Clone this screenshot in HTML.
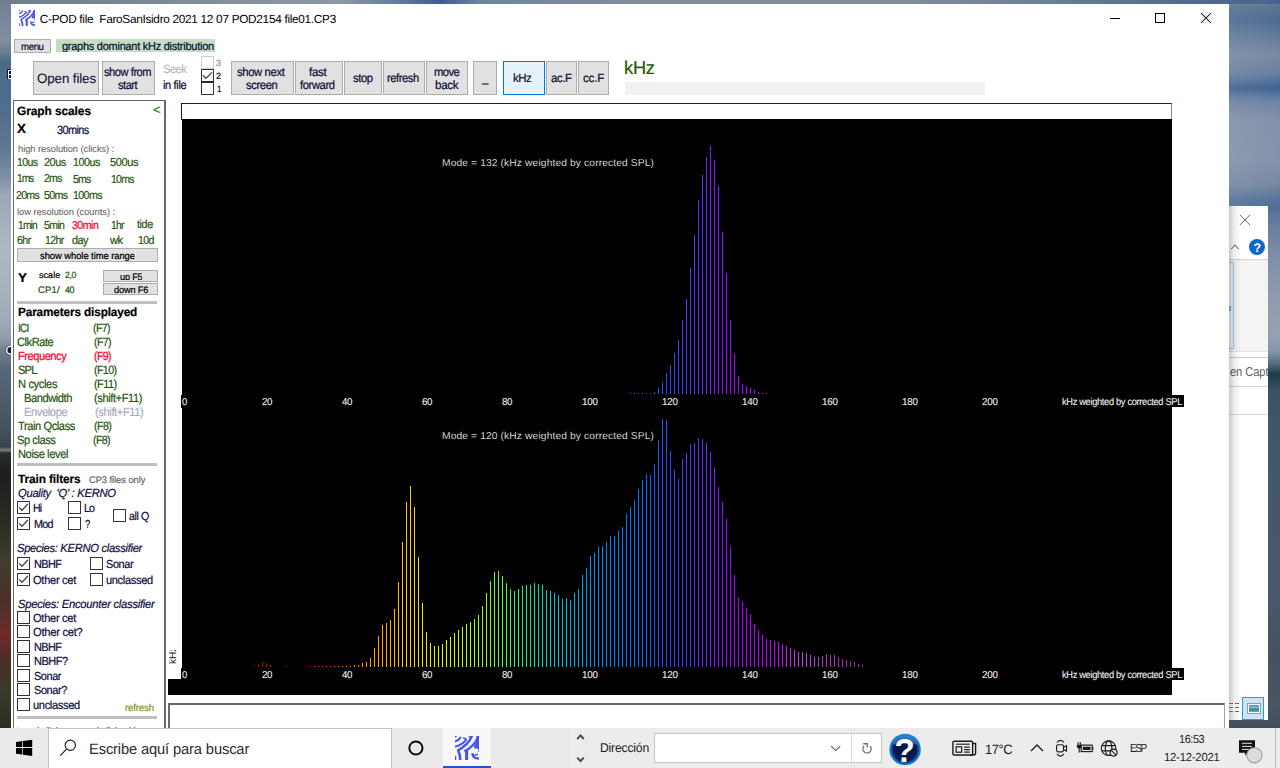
<!DOCTYPE html>
<html lang="es"><head><meta charset="utf-8"><title>C-POD file</title>
<style>
html,body{margin:0;padding:0;}
body{width:1280px;height:768px;overflow:hidden;position:relative;background:#5c6f82;font-family:"Liberation Sans",sans-serif;}
div,span,svg{position:absolute;box-sizing:border-box;}
.t{white-space:pre;text-rendering:geometricPrecision;transform-origin:0 50%;}
.btn{background:#e1e1e1;border:1px solid #adadad;}
.bt{white-space:nowrap;text-align:center;color:#15153a;}
.cb{background:#fff;border:1px solid #333;}
.sep{background:#c0c0c0;}

</style></head>
<body>
<div style="left:0px;top:0px;width:20px;height:768px;background:linear-gradient(180deg,#6e7f90 0px,#77869a 15px,#808d9b 40px,#6a7f94 52px,#4b6a8a 62px,#4f6d8c 110px,#5e7892 150px,#7a8ea4 175px,#9ca8b6 195px,#b0b8c2 250px,#a0abb7 320px,#8d9aa8 340px,#6f8090 350px,#556878 370px,#42525f 430px,#39444c 447px,#80807a 450px,#2a2e30 453px,#1c1e20 470px,#2a2a22 520px,#3f3d2c 560px,#4a3028 600px,#6e2a2a 635px,#4a2c26 660px,#3a3a2a 690px,#2e2c24 728px);"></div>
<div style="left:7px;top:69px;width:4px;height:10px;background:#141a3c;"></div>
<div style="left:8px;top:70px;width:1.4px;height:9px;background:#f4fbff;"></div>
<div style="left:8px;top:70px;width:3px;height:1.2px;background:#f4fbff;"></div>
<div style="left:8px;top:74.2px;width:3px;height:1.2px;background:#f4fbff;"></div>
<div style="left:8px;top:77.8px;width:3px;height:1.2px;background:#f4fbff;"></div>
<svg style="left:3px;top:343px" width="8" height="14" viewBox="3 343 8 14"><circle cx="10.6" cy="350.2" r="5.6" fill="#3a4250" opacity="0.55"/><circle cx="10.6" cy="350.2" r="3.9" fill="#1c2030" stroke="#f2f6fa" stroke-width="1.5"/></svg>
<div style="left:1229px;top:0px;width:51px;height:768px;background:linear-gradient(180deg,#70839b 0px,#5d7797 8px,#4e6d96 20px,#64809f 35px,#8292ab 55px,#6a85a8 75px,#3f6394 88px,#6f88aa 100px,#8c9bb3 120px,#8e9cb3 160px,#7d8fab 185px,#5877a0 200px,#50709a 208px,#6a809e 228px,#8090a8 260px,#909cae 300px,#95a1b2 335px,#8494a6 352px,#566a7c 364px,#1f3c4a 374px,#3a5463 392px,#425868 450px,#45586a 520px,#48586a 600px,#455260 660px,#4a5564 705px,#424e5e 728px);"></div>
<div style="left:1229px;top:0px;width:51px;height:210px;background:linear-gradient(90deg,rgba(140,150,165,0.22),rgba(60,80,110,0.12));"></div>
<div style="left:0px;top:0px;width:1280px;height:4px;background:linear-gradient(90deg,#6e7f90 0px,#7d8b9a 180px,#8a98a6 340px,#5f7aa0 400px,#3d5e94 440px,#6e85a2 480px,#7f8d9c 640px,#808e9d 900px,#6a7f98 1050px,#55708f 1150px,#46658e 1280px);"></div>
<div style="left:1229px;top:206px;width:39px;height:514px;background:#fff;"></div>
<div style="left:1229px;top:260px;width:39px;height:91px;background:#f4f4f4;"></div>
<div style="left:1229px;top:259px;width:39px;height:1px;background:#d4d4d4;"></div>
<div style="left:1229px;top:262px;width:5px;height:87px;background:#eef5fc;border:1px solid #a9c8ea;border-left:none;"></div>
<div style="left:1229px;top:351px;width:39px;height:1px;background:#e2e2e2;"></div>
<div style="left:1229px;top:357px;width:39px;height:1px;background:#cfcfcf;"></div>
<div style="left:1229px;top:386px;width:39px;height:1px;background:#d4d4d4;"></div>
<div style="left:1229px;top:414px;width:39px;height:1px;background:#d8d8d8;"></div>
<div style="left:1229px;top:306px;width:1.5px;height:5px;background:#7ab0e8;"></div>
<svg style="left:1239px;top:214px" width="12" height="12" viewBox="0 0 12 12"><path d="M0.8 0.8L11 11M11 0.8L0.8 11" stroke="#6a6a6a" stroke-width="1" fill="none"/></svg>
<svg style="left:1230px;top:242px" width="10" height="9" viewBox="0 0 10 9"><path d="M1.2 7.2L5 3.0L8.8 7.2" stroke="#8a8a8a" stroke-width="1.2" fill="none"/></svg>
<div style="left:1249px;top:239px;width:16px;height:16px;background:#1268c8;border-radius:8px;"></div>
<span class="t " style="left:1253.60px;top:242px;font-size:12.5px;line-height:12.5px;color:#fff;font-weight:bold;">?</span>
<div style="left:1229px;top:360px;width:39px;height:24px;overflow:hidden;"><span class="t" style="left:1.2px;top:6px;font-size:12.8px;line-height:12.8px;color:#5c5c5c;transform:scaleX(0.87);letter-spacing:-0.1px;">en Capt</span></div>
<div style="left:1229px;top:206px;width:12px;height:514px;background:linear-gradient(90deg,rgba(0,0,0,0.22),rgba(0,0,0,0.08) 40%,rgba(0,0,0,0));"></div>
<div style="left:1242px;top:697px;width:22px;height:23px;background:#cce4f7;border:1px solid #2a9be0;"></div>
<div style="left:1247px;top:703px;width:14px;height:11px;background:#fff;border:1px solid #9a9a9a;"></div>
<div style="left:1249px;top:705px;width:10px;height:7px;background:linear-gradient(180deg,#4a90e0 0%,#7ab8ee 40%,#3f7f6a 60%,#7aa6c8 100%);"></div>
<div style="left:1229.3px;top:703px;width:3.6px;height:1px;background:#666;"></div>
<div style="left:1235px;top:703px;width:4px;height:1px;background:#666;"></div>
<div style="left:1229.3px;top:707px;width:3.6px;height:1px;background:#666;"></div>
<div style="left:1235px;top:707px;width:4px;height:1px;background:#666;"></div>
<div style="left:1229.3px;top:711px;width:3.6px;height:1px;background:#666;"></div>
<div style="left:1235px;top:711px;width:4px;height:1px;background:#666;"></div>
<div style="left:11px;top:4px;width:1218px;height:724px;background:#fff;"></div>
<svg style="left:19px;top:10px" width="16" height="16" viewBox="0 0 24 24"><g stroke="#4854ee" fill="none"><path d="M0 5.4C2.5 4.8 4.6 3.2 6 1" stroke-width="2.15"/><path d="M0 10.8C4.5 9.4 9 6.6 11.4 3.6" stroke-width="2.15"/><path d="M8.2 1.9L11.9 3.5" stroke-width="1.7"/><path d="M2.2 14.8C8 11.6 14.3 6.7 16.4 1" stroke-width="2.35"/><path d="M3.3 14.8C4.7 17.7 5.3 20.6 5.3 24" stroke-width="2.6"/><path d="M9.4 15.4C14.5 12.6 19.3 8.7 21.6 4L22.8 0.8" stroke-width="2.35"/><path d="M11.6 14.4V24" stroke-width="3.1"/><path d="M17.6 17.2C17.2 20.4 19.6 22.6 24 22.6" stroke-width="2.5"/><path d="M19.4 19.2L23 18.2" stroke-width="1.6"/></g><g fill="#4854ee"><path d="M13.6 0H18.2L17 2.6L14.8 2Z"/><path d="M21.6 0H24V15.6L23 16.2L20.4 12.8L18.6 10.8L21 7.2Z"/><rect x="0" y="19.8" width="1.2" height="4.2"/><rect x="0" y="0" width="1.6" height="1.4"/></g><circle cx="21.7" cy="14.3" r="1.8" fill="#fff"/></svg>
<span class="t " style="left:39.80px;top:14px;font-size:11.8px;line-height:11.8px;color:#000;letter-spacing:-0.291px;">C-POD file  FaroSanIsidro 2021 12 07 POD2154 file01.CP3</span>
<div style="left:1110px;top:18px;width:10px;height:1px;background:#000;"></div>
<div style="left:1155px;top:13px;width:10px;height:10px;border:1px solid #000;"></div>
<svg style="left:1200px;top:12px" width="12" height="12" viewBox="0 0 12 12"><path d="M1 1L11 11M11 1L1 11" stroke="#000" stroke-width="1.05" fill="none"/></svg>
<div class="btn" style="left:14px;top:39px;width:37px;height:14px;"></div>
<span class="t " style="left:21.00px;top:43px;font-size:10.2px;line-height:10.2px;color:#0c0c34;-webkit-text-stroke:0.22px currentColor;letter-spacing:-0.414px;transform:scaleX(0.9488);">menu</span>
<div style="left:56px;top:39px;width:159px;height:13px;background:#c3dfc3;"></div>
<span class="t " style="left:61.90px;top:42px;font-size:11.5px;line-height:11.5px;color:#0c0c34;-webkit-text-stroke:0.22px currentColor;letter-spacing:-0.248px;transform:scaleX(0.9519);height:10px;overflow:hidden;">graphs dominant kHz distribution</span>
<div class="btn" style="left:33px;top:61px;width:66px;height:34px;"></div>
<span class="t " style="left:36.50px;top:72px;font-size:13.6px;line-height:13.6px;color:#0c0c34;-webkit-text-stroke:0.05px currentColor;letter-spacing:-0.118px;transform:scaleX(0.9824);">Open files</span>
<div class="btn" style="left:102px;top:61px;width:53px;height:34px;"></div>
<span class="t " style="left:103.70px;top:66px;font-size:12px;line-height:12px;color:#0c0c34;-webkit-text-stroke:0.22px currentColor;letter-spacing:-0.485px;transform:scaleX(0.9246);">show from</span>
<span class="t " style="left:117.70px;top:79px;font-size:12px;line-height:12px;color:#0c0c34;-webkit-text-stroke:0.22px currentColor;letter-spacing:-0.468px;transform:scaleX(0.9128);">start</span>
<span class="t " style="left:163.00px;top:63px;font-size:12px;line-height:12px;color:#b4b4c4;-webkit-text-stroke:0.1px currentColor;letter-spacing:-0.577px;transform:scaleX(0.9325);">Seek</span>
<span class="t " style="left:162.80px;top:79px;font-size:12px;line-height:12px;color:#0c0c34;-webkit-text-stroke:0.22px currentColor;letter-spacing:-0.368px;transform:scaleX(0.9145);">in file</span>
<div style="left:201px;top:56px;width:13px;height:13px;background:#fff;border:1px solid #cfcfcf;"></div>
<div class="cb" style="left:201px;top:69px;width:13px;height:13px;"></div>
<div class="cb" style="left:201px;top:82px;width:13px;height:13px;"></div>
<div style="left:201px;top:81px;width:13px;height:2px;background:#2a2a2a;"></div>
<svg style="left:201px;top:69px" width="13" height="13" viewBox="0 0 13 13"><path d="M1.9 6.1L4.8 9.4L11 3.4" stroke="#333" stroke-width="1.15" fill="none"/></svg>
<span class="t " style="left:216.00px;top:59px;font-size:9px;line-height:9px;color:#9090a8;-webkit-text-stroke:0.22px currentColor;letter-spacing:-0.008px;transform:scaleX(0.9984);">3</span>
<span class="t " style="left:216.00px;top:72px;font-size:9px;line-height:9px;color:#0c0c34;-webkit-text-stroke:0.22px currentColor;letter-spacing:-0.008px;transform:scaleX(0.9984);">2</span>
<span class="t " style="left:216.50px;top:85px;font-size:9px;line-height:9px;color:#0c0c34;-webkit-text-stroke:0.22px currentColor;letter-spacing:-0.508px;transform:scaleX(0.8873);">1</span>
<div class="btn" style="left:231px;top:61px;width:63px;height:34px;"></div>
<span class="t " style="left:237.40px;top:66px;font-size:12px;line-height:12px;color:#0c0c34;-webkit-text-stroke:0.22px currentColor;letter-spacing:-0.389px;transform:scaleX(0.9388);">show next</span>
<span class="t " style="left:245.60px;top:79px;font-size:12px;line-height:12px;color:#0c0c34;-webkit-text-stroke:0.22px currentColor;letter-spacing:-0.423px;transform:scaleX(0.9376);">screen</span>
<div class="btn" style="left:295px;top:61px;width:48px;height:34px;"></div>
<span class="t " style="left:308.70px;top:66px;font-size:12px;line-height:12px;color:#0c0c34;-webkit-text-stroke:0.22px currentColor;letter-spacing:-0.274px;transform:scaleX(0.9556);">fast</span>
<span class="t " style="left:300.30px;top:79px;font-size:12px;line-height:12px;color:#0c0c34;-webkit-text-stroke:0.22px currentColor;letter-spacing:-0.418px;transform:scaleX(0.9331);">forward</span>
<div class="btn" style="left:344px;top:61px;width:38px;height:34px;"></div>
<span class="t " style="left:352.50px;top:72px;font-size:12px;line-height:12px;color:#0c0c34;-webkit-text-stroke:0.22px currentColor;letter-spacing:-0.448px;transform:scaleX(0.9370);">stop</span>
<div class="btn" style="left:383px;top:61px;width:42px;height:34px;"></div>
<span class="t " style="left:387.40px;top:72px;font-size:12px;line-height:12px;color:#0c0c34;-webkit-text-stroke:0.22px currentColor;letter-spacing:-0.430px;transform:scaleX(0.9258);">refresh</span>
<div class="btn" style="left:426px;top:61px;width:42px;height:34px;"></div>
<span class="t " style="left:433.80px;top:66px;font-size:12px;line-height:12px;color:#0c0c34;-webkit-text-stroke:0.22px currentColor;letter-spacing:-0.591px;transform:scaleX(0.9357);">move</span>
<span class="t " style="left:434.60px;top:79px;font-size:12px;line-height:12px;color:#0c0c34;-webkit-text-stroke:0.22px currentColor;letter-spacing:-0.293px;transform:scaleX(0.9641);">back</span>
<div class="btn" style="left:473px;top:61px;width:24px;height:34px;"></div>
<span class="t " style="left:482.00px;top:72px;font-size:12px;line-height:12px;color:#0c0c34;-webkit-text-stroke:0.22px currentColor;letter-spacing:-0.344px;transform:scaleX(0.9458);">_</span>
<div style="left:503px;top:61px;width:42px;height:34px;background:#e5f1fb;border:1px solid #0078d7;"></div>
<span class="t " style="left:513.40px;top:72px;font-size:12px;line-height:12px;color:#0c0c34;-webkit-text-stroke:0.22px currentColor;letter-spacing:-0.493px;transform:scaleX(0.9499);">kHz</span>
<div class="btn" style="left:546px;top:61px;width:31px;height:34px;"></div>
<span class="t " style="left:551.00px;top:72px;font-size:12px;line-height:12px;color:#0c0c34;-webkit-text-stroke:0.22px currentColor;letter-spacing:-0.391px;transform:scaleX(0.9471);">ac.F</span>
<div class="btn" style="left:578px;top:61px;width:31px;height:34px;"></div>
<span class="t " style="left:582.50px;top:72px;font-size:12px;line-height:12px;color:#0c0c34;-webkit-text-stroke:0.22px currentColor;letter-spacing:-0.229px;transform:scaleX(0.9688);">cc.F</span>
<span class="t " style="left:624.00px;top:59px;font-size:18.5px;line-height:18.5px;color:#1f5a00;-webkit-text-stroke:0.22px currentColor;letter-spacing:-0.219px;transform:scaleX(0.9861);">kHz</span>
<div style="left:625px;top:82px;width:360px;height:13px;background:#f0f0f0;"></div>
<div style="left:13px;top:100px;width:153px;height:628px;background:#fff;border:1px solid #6a6a6a;border-right:2px solid #6a6a6a;border-bottom:none;"></div>
<span class="t " style="left:17.00px;top:105px;font-size:12px;line-height:12px;color:#000;font-weight:bold;-webkit-text-stroke:0.22px currentColor;letter-spacing:-0.062px;transform:scaleX(0.9908);">Graph scales</span>
<span class="t " style="left:152.50px;top:103px;font-size:13px;line-height:13px;color:#2a8a14;-webkit-text-stroke:0.22px currentColor;letter-spacing:-0.047px;transform:scaleX(0.9938);">&lt;</span>
<span class="t " style="left:17.00px;top:122px;font-size:13.2px;line-height:13.2px;color:#000;font-weight:bold;-webkit-text-stroke:0.22px currentColor;letter-spacing:0.102px;transform:scaleX(1.0114);">X</span>
<span class="t " style="left:57.00px;top:124px;font-size:12px;line-height:12px;color:#0e0e40;-webkit-text-stroke:0.22px currentColor;letter-spacing:-0.639px;transform:scaleX(0.9100);">30mins</span>
<span class="t " style="left:17.70px;top:145px;font-size:9.3px;line-height:9.3px;color:#686868;-webkit-text-stroke:0.1px currentColor;letter-spacing:-0.017px;transform:scaleX(0.9957);">high resolution (clicks) :</span>
<span class="t " style="left:17.20px;top:157px;font-size:11.6px;line-height:11.6px;color:#27560f;-webkit-text-stroke:0.22px currentColor;letter-spacing:-0.707px;transform:scaleX(0.9079);">10us</span>
<span class="t " style="left:44.00px;top:157px;font-size:11.6px;line-height:11.6px;color:#27560f;-webkit-text-stroke:0.22px currentColor;letter-spacing:-0.490px;transform:scaleX(0.9379);">20us</span>
<span class="t " style="left:73.00px;top:157px;font-size:11.6px;line-height:11.6px;color:#27560f;-webkit-text-stroke:0.22px currentColor;letter-spacing:-0.537px;transform:scaleX(0.9271);">100us</span>
<span class="t " style="left:110.00px;top:157px;font-size:11.6px;line-height:11.6px;color:#27560f;-webkit-text-stroke:0.22px currentColor;letter-spacing:-0.387px;transform:scaleX(0.9485);">500us</span>
<span class="t " style="left:17.20px;top:173px;font-size:11.6px;line-height:11.6px;color:#27560f;-webkit-text-stroke:0.22px currentColor;letter-spacing:-1.177px;transform:scaleX(0.8797);">1ms</span>
<span class="t " style="left:44.00px;top:173px;font-size:11.6px;line-height:11.6px;color:#27560f;-webkit-text-stroke:0.22px currentColor;letter-spacing:-0.927px;transform:scaleX(0.9076);">2ms</span>
<span class="t " style="left:73.00px;top:174px;font-size:11.6px;line-height:11.6px;color:#27560f;-webkit-text-stroke:0.22px currentColor;letter-spacing:-0.927px;transform:scaleX(0.9076);">5ms</span>
<span class="t " style="left:111.00px;top:174px;font-size:11.6px;line-height:11.6px;color:#27560f;-webkit-text-stroke:0.22px currentColor;letter-spacing:-0.827px;transform:scaleX(0.9042);">10ms</span>
<span class="t " style="left:16.30px;top:190px;font-size:11.6px;line-height:11.6px;color:#27560f;-webkit-text-stroke:0.22px currentColor;letter-spacing:-0.777px;transform:scaleX(0.9105);">20ms</span>
<span class="t " style="left:44.00px;top:190px;font-size:11.6px;line-height:11.6px;color:#27560f;-webkit-text-stroke:0.22px currentColor;letter-spacing:-0.710px;transform:scaleX(0.9188);">50ms</span>
<span class="t " style="left:73.00px;top:190px;font-size:11.6px;line-height:11.6px;color:#27560f;-webkit-text-stroke:0.22px currentColor;letter-spacing:-0.664px;transform:scaleX(0.9174);">100ms</span>
<span class="t " style="left:17.00px;top:208px;font-size:9.3px;line-height:9.3px;color:#686868;-webkit-text-stroke:0.1px currentColor;letter-spacing:0.000px;transform:scaleX(1.0001);">low resolution (counts) :</span>
<span class="t " style="left:18.00px;top:220px;font-size:11.6px;line-height:11.6px;color:#27560f;-webkit-text-stroke:0.22px currentColor;letter-spacing:-0.890px;transform:scaleX(0.8812);">1min</span>
<span class="t " style="left:44.00px;top:220px;font-size:11.6px;line-height:11.6px;color:#27560f;-webkit-text-stroke:0.22px currentColor;letter-spacing:-0.690px;transform:scaleX(0.9103);">5min</span>
<span class="t " style="left:72.20px;top:220px;font-size:11.6px;line-height:11.6px;color:#f8002a;-webkit-text-stroke:0.22px currentColor;letter-spacing:-0.597px;transform:scaleX(0.9182);">30min</span>
<span class="t " style="left:111.00px;top:220px;font-size:11.6px;line-height:11.6px;color:#27560f;-webkit-text-stroke:0.22px currentColor;letter-spacing:-0.841px;transform:scaleX(0.8884);">1hr</span>
<span class="t " style="left:136.90px;top:219px;font-size:11.6px;line-height:11.6px;color:#27560f;-webkit-text-stroke:0.22px currentColor;letter-spacing:-0.417px;transform:scaleX(0.9283);">tide</span>
<span class="t " style="left:17.20px;top:235px;font-size:11.6px;line-height:11.6px;color:#27560f;-webkit-text-stroke:0.22px currentColor;letter-spacing:-0.616px;transform:scaleX(0.9206);">6hr</span>
<span class="t " style="left:45.20px;top:235px;font-size:11.6px;line-height:11.6px;color:#27560f;-webkit-text-stroke:0.22px currentColor;letter-spacing:-0.670px;transform:scaleX(0.9053);">12hr</span>
<span class="t " style="left:72.00px;top:235px;font-size:11.6px;line-height:11.6px;color:#27560f;-webkit-text-stroke:0.22px currentColor;letter-spacing:-0.551px;transform:scaleX(0.9374);">day</span>
<span class="t " style="left:110.00px;top:235px;font-size:11.6px;line-height:11.6px;color:#27560f;-webkit-text-stroke:0.22px currentColor;letter-spacing:-0.536px;transform:scaleX(0.9607);">wk</span>
<span class="t " style="left:137.70px;top:235px;font-size:11.6px;line-height:11.6px;color:#27560f;-webkit-text-stroke:0.22px currentColor;letter-spacing:-0.761px;transform:scaleX(0.9146);">10d</span>
<div class="btn" style="left:17px;top:248px;width:141px;height:14px;"></div>
<span class="t " style="left:40.00px;top:252px;font-size:9.6px;line-height:9.6px;color:#000;-webkit-text-stroke:0.22px currentColor;letter-spacing:-0.078px;transform:scaleX(0.9838);height:8.6px;overflow:hidden;">show whole time range</span>
<span class="t " style="left:17.70px;top:272px;font-size:12.8px;line-height:12.8px;color:#000;font-weight:bold;-webkit-text-stroke:0.22px currentColor;letter-spacing:0.377px;transform:scaleX(1.0422);">Y</span>
<span class="t " style="left:38.80px;top:271px;font-size:9px;line-height:9px;color:#000;-webkit-text-stroke:0.22px currentColor;letter-spacing:0.023px;transform:scaleX(1.0044);">scale</span>
<span class="t " style="left:64.80px;top:271px;font-size:9px;line-height:9px;color:#27560f;-webkit-text-stroke:0.22px currentColor;letter-spacing:-0.279px;transform:scaleX(0.9534);">2,0</span>
<span class="t " style="left:37.80px;top:286px;font-size:9.5px;line-height:9.5px;color:#27560f;-webkit-text-stroke:0.22px currentColor;letter-spacing:0.079px;transform:scaleX(1.0111);">CP1/</span>
<span class="t " style="left:65.00px;top:286px;font-size:9.5px;line-height:9.5px;color:#27560f;-webkit-text-stroke:0.22px currentColor;letter-spacing:-0.589px;transform:scaleX(0.9410);">40</span>
<div class="btn" style="left:103px;top:270px;width:55px;height:12px;"></div>
<span class="t " style="left:119.70px;top:272px;font-size:9.4px;line-height:9.4px;color:#000;-webkit-text-stroke:0.22px currentColor;letter-spacing:-0.173px;transform:scaleX(0.9703);height:8.4px;overflow:hidden;">up F5</span>
<div class="btn" style="left:103px;top:283px;width:55px;height:12px;"></div>
<span class="t " style="left:113.70px;top:285px;font-size:9.4px;line-height:9.4px;color:#000;-webkit-text-stroke:0.22px currentColor;letter-spacing:-0.131px;transform:scaleX(0.9777);">down F6</span>
<div class="sep" style="left:17px;top:301px;width:140px;height:3px;"></div>
<span class="t " style="left:17.70px;top:306px;font-size:12px;line-height:12px;color:#000;font-weight:bold;-webkit-text-stroke:0.22px currentColor;letter-spacing:-0.126px;transform:scaleX(0.9804);">Parameters displayed</span>
<span class="t " style="left:17.70px;top:322px;font-size:12px;line-height:12px;color:#27560f;-webkit-text-stroke:0.22px currentColor;letter-spacing:-1.011px;transform:scaleX(0.8482);">ICI</span>
<span class="t " style="left:93.10px;top:322px;font-size:12px;line-height:12px;color:#27560f;-webkit-text-stroke:0.22px currentColor;letter-spacing:-0.750px;transform:scaleX(0.8861);">(F7)</span>
<span class="t " style="left:17.30px;top:336px;font-size:12px;line-height:12px;color:#27560f;-webkit-text-stroke:0.22px currentColor;letter-spacing:-0.499px;transform:scaleX(0.9246);">ClkRate</span>
<span class="t " style="left:94.40px;top:336px;font-size:12px;line-height:12px;color:#27560f;-webkit-text-stroke:0.22px currentColor;letter-spacing:-0.750px;transform:scaleX(0.8861);">(F7)</span>
<span class="t " style="left:17.50px;top:350px;font-size:12px;line-height:12px;color:#f8002a;-webkit-text-stroke:0.22px currentColor;letter-spacing:-0.500px;transform:scaleX(0.9241);">Frequency</span>
<span class="t " style="left:94.40px;top:350px;font-size:12px;line-height:12px;color:#f8002a;-webkit-text-stroke:0.22px currentColor;letter-spacing:-0.750px;transform:scaleX(0.8861);">(F9)</span>
<span class="t " style="left:17.50px;top:364px;font-size:12px;line-height:12px;color:#27560f;-webkit-text-stroke:0.22px currentColor;letter-spacing:-0.822px;transform:scaleX(0.9219);">SPL</span>
<span class="t " style="left:94.40px;top:364px;font-size:12px;line-height:12px;color:#27560f;-webkit-text-stroke:0.22px currentColor;letter-spacing:-0.696px;transform:scaleX(0.8924);">(F10)</span>
<span class="t " style="left:17.70px;top:378px;font-size:12px;line-height:12px;color:#27560f;-webkit-text-stroke:0.22px currentColor;letter-spacing:-0.417px;transform:scaleX(0.9311);">N cycles</span>
<span class="t " style="left:94.40px;top:378px;font-size:12px;line-height:12px;color:#27560f;-webkit-text-stroke:0.22px currentColor;letter-spacing:-0.585px;transform:scaleX(0.9080);">(F11)</span>
<span class="t " style="left:23.50px;top:392px;font-size:12px;line-height:12px;color:#27560f;-webkit-text-stroke:0.22px currentColor;letter-spacing:-0.478px;transform:scaleX(0.9268);">Bandwidth</span>
<span class="t " style="left:94.40px;top:392px;font-size:12px;line-height:12px;color:#27560f;-webkit-text-stroke:0.22px currentColor;letter-spacing:-0.420px;transform:scaleX(0.9202);">(shift+F11)</span>
<span class="t " style="left:23.50px;top:406px;font-size:12px;line-height:12px;color:#adadbd;-webkit-text-stroke:0.22px currentColor;letter-spacing:-0.453px;transform:scaleX(0.9323);">Envelope</span>
<span class="t " style="left:95.00px;top:406px;font-size:12px;line-height:12px;color:#adadbd;-webkit-text-stroke:0.22px currentColor;letter-spacing:-0.400px;transform:scaleX(0.9243);">(shift+F11)</span>
<span class="t " style="left:17.70px;top:420px;font-size:12px;line-height:12px;color:#27560f;-webkit-text-stroke:0.22px currentColor;letter-spacing:-0.437px;transform:scaleX(0.9227);">Train Qclass</span>
<span class="t " style="left:94.00px;top:420px;font-size:12px;line-height:12px;color:#27560f;-webkit-text-stroke:0.22px currentColor;letter-spacing:-0.683px;transform:scaleX(0.8972);">(F8)</span>
<span class="t " style="left:17.30px;top:434px;font-size:12px;line-height:12px;color:#27560f;-webkit-text-stroke:0.22px currentColor;letter-spacing:-0.461px;transform:scaleX(0.9233);">Sp class</span>
<span class="t " style="left:93.10px;top:434px;font-size:12px;line-height:12px;color:#27560f;-webkit-text-stroke:0.22px currentColor;letter-spacing:-0.750px;transform:scaleX(0.8861);">(F8)</span>
<span class="t " style="left:17.70px;top:448px;font-size:12px;line-height:12px;color:#27560f;-webkit-text-stroke:0.22px currentColor;letter-spacing:-0.415px;transform:scaleX(0.9239);">Noise level</span>
<div class="sep" style="left:17px;top:463px;width:140px;height:3px;"></div>
<span class="t " style="left:18.00px;top:473px;font-size:12px;line-height:12px;color:#000;font-weight:bold;-webkit-text-stroke:0.22px currentColor;letter-spacing:-0.087px;transform:scaleX(0.9836);">Train filters</span>
<span class="t " style="left:88.80px;top:476px;font-size:9.5px;line-height:9.5px;color:#686868;-webkit-text-stroke:0.22px currentColor;letter-spacing:-0.065px;transform:scaleX(0.9852);">CP3 files only</span>
<span class="t " style="left:18.00px;top:488px;font-size:11.8px;line-height:11.8px;color:#0e0e40;font-style:italic;-webkit-text-stroke:0.22px currentColor;letter-spacing:-0.283px;transform:scaleX(0.9480);">Quality  &#x27;Q&#x27; : KERNO</span>
<div class="cb" style="left:17px;top:501px;width:13px;height:13px;"></div>
<svg style="left:17px;top:501px" width="13" height="13" viewBox="0 0 13 13"><path d="M2.2 6.4L5 9.3L10.8 3" stroke="#333" stroke-width="1.15" fill="none"/></svg>
<span class="t " style="left:33.40px;top:503px;font-size:11.7px;line-height:11.7px;color:#0e0e40;-webkit-text-stroke:0.22px currentColor;letter-spacing:-0.973px;transform:scaleX(0.9034);">Hi</span>
<div class="cb" style="left:17px;top:517px;width:13px;height:13px;"></div>
<svg style="left:17px;top:517px" width="13" height="13" viewBox="0 0 13 13"><path d="M2.2 6.4L5 9.3L10.8 3" stroke="#333" stroke-width="1.15" fill="none"/></svg>
<span class="t " style="left:33.50px;top:519px;font-size:11.7px;line-height:11.7px;color:#0e0e40;-webkit-text-stroke:0.22px currentColor;letter-spacing:-0.787px;transform:scaleX(0.9256);">Mod</span>
<div class="cb" style="left:68px;top:501px;width:13px;height:13px;"></div>
<span class="t " style="left:84.20px;top:503px;font-size:11.7px;line-height:11.7px;color:#0e0e40;-webkit-text-stroke:0.22px currentColor;letter-spacing:-1.108px;transform:scaleX(0.9070);">Lo</span>
<div class="cb" style="left:68px;top:517px;width:13px;height:13px;"></div>
<span class="t " style="left:85.00px;top:519px;font-size:11.7px;line-height:11.7px;color:#0e0e40;-webkit-text-stroke:0.22px currentColor;letter-spacing:-1.058px;transform:scaleX(0.8062);">?</span>
<div class="cb" style="left:113px;top:509px;width:13px;height:13px;"></div>
<span class="t " style="left:128.70px;top:511px;font-size:11.7px;line-height:11.7px;color:#0e0e40;-webkit-text-stroke:0.22px currentColor;letter-spacing:-0.468px;transform:scaleX(0.9155);">all Q</span>
<span class="t " style="left:17.20px;top:543px;font-size:11.8px;line-height:11.8px;color:#0e0e40;font-style:italic;-webkit-text-stroke:0.22px currentColor;letter-spacing:-0.299px;transform:scaleX(0.9459);">Species: KERNO classifier</span>
<div class="cb" style="left:17px;top:557px;width:13px;height:13px;"></div>
<svg style="left:17px;top:557px" width="13" height="13" viewBox="0 0 13 13"><path d="M2.2 6.4L5 9.3L10.8 3" stroke="#333" stroke-width="1.15" fill="none"/></svg>
<span class="t " style="left:33.70px;top:559px;font-size:11.7px;line-height:11.7px;color:#0e0e40;-webkit-text-stroke:0.22px currentColor;letter-spacing:-0.671px;transform:scaleX(0.9324);">NBHF</span>
<div class="cb" style="left:17px;top:573px;width:13px;height:13px;"></div>
<svg style="left:17px;top:573px" width="13" height="13" viewBox="0 0 13 13"><path d="M2.2 6.4L5 9.3L10.8 3" stroke="#333" stroke-width="1.15" fill="none"/></svg>
<span class="t " style="left:32.70px;top:575px;font-size:11.7px;line-height:11.7px;color:#0e0e40;-webkit-text-stroke:0.22px currentColor;letter-spacing:-0.299px;transform:scaleX(0.9477);">Other cet</span>
<div class="cb" style="left:90px;top:557px;width:13px;height:13px;"></div>
<span class="t " style="left:106.20px;top:559px;font-size:11.7px;line-height:11.7px;color:#0e0e40;-webkit-text-stroke:0.22px currentColor;letter-spacing:-0.450px;transform:scaleX(0.9387);">Sonar</span>
<div class="cb" style="left:90px;top:573px;width:13px;height:13px;"></div>
<span class="t " style="left:106.00px;top:575px;font-size:11.7px;line-height:11.7px;color:#0e0e40;-webkit-text-stroke:0.22px currentColor;letter-spacing:-0.346px;transform:scaleX(0.9444);">unclassed</span>
<span class="t " style="left:18.00px;top:599px;font-size:11.8px;line-height:11.8px;color:#0e0e40;font-style:italic;-webkit-text-stroke:0.22px currentColor;letter-spacing:-0.262px;transform:scaleX(0.9491);">Species: Encounter classifier</span>
<div class="cb" style="left:17px;top:611px;width:13px;height:13px;"></div>
<span class="t " style="left:32.70px;top:613px;font-size:11.7px;line-height:11.7px;color:#0e0e40;-webkit-text-stroke:0.22px currentColor;letter-spacing:-0.299px;transform:scaleX(0.9477);">Other cet</span>
<div class="cb" style="left:17px;top:625px;width:13px;height:13px;"></div>
<span class="t " style="left:32.70px;top:627px;font-size:11.7px;line-height:11.7px;color:#0e0e40;-webkit-text-stroke:0.22px currentColor;letter-spacing:-0.265px;transform:scaleX(0.9542);">Other cet?</span>
<div class="cb" style="left:17px;top:640px;width:13px;height:13px;"></div>
<span class="t " style="left:33.70px;top:642px;font-size:11.7px;line-height:11.7px;color:#0e0e40;-webkit-text-stroke:0.22px currentColor;letter-spacing:-0.671px;transform:scaleX(0.9324);">NBHF</span>
<div class="cb" style="left:17px;top:654px;width:13px;height:13px;"></div>
<span class="t " style="left:33.70px;top:656px;font-size:11.7px;line-height:11.7px;color:#0e0e40;-webkit-text-stroke:0.22px currentColor;letter-spacing:-0.529px;transform:scaleX(0.9416);">NBHF?</span>
<div class="cb" style="left:17px;top:669px;width:13px;height:13px;"></div>
<span class="t " style="left:33.50px;top:671px;font-size:11.7px;line-height:11.7px;color:#0e0e40;-webkit-text-stroke:0.22px currentColor;letter-spacing:-0.463px;transform:scaleX(0.9369);">Sonar</span>
<div class="cb" style="left:17px;top:683px;width:13px;height:13px;"></div>
<span class="t " style="left:33.50px;top:685px;font-size:11.7px;line-height:11.7px;color:#0e0e40;-webkit-text-stroke:0.22px currentColor;letter-spacing:-0.430px;transform:scaleX(0.9395);">Sonar?</span>
<div class="cb" style="left:17px;top:698px;width:13px;height:13px;"></div>
<span class="t " style="left:32.80px;top:700px;font-size:11.7px;line-height:11.7px;color:#0e0e40;-webkit-text-stroke:0.22px currentColor;letter-spacing:-0.340px;transform:scaleX(0.9455);">unclassed</span>
<span class="t " style="left:124.70px;top:704px;font-size:10px;line-height:10px;color:#7a9a1e;-webkit-text-stroke:0.22px currentColor;letter-spacing:-0.169px;transform:scaleX(0.9664);">refresh</span>
<div class="sep" style="left:17px;top:716px;width:140px;height:3px;"></div>
<span class="t " style="left:17.00px;top:726px;font-size:12px;line-height:12px;color:#2a4fb0;-webkit-text-stroke:0.22px currentColor;letter-spacing:-0.513px;transform:scaleX(0.8980);">Loud clicks around clicked bar</span>
<div style="left:181px;top:103px;width:991px;height:17px;background:#fff;border-top:1px solid #0000ff;border-left:1px solid #0000ff;border-right:1px solid #8a8a8a;"></div>
<div style="left:182px;top:119px;width:990px;height:576px;background:#000;"></div>
<div style="left:168px;top:679px;width:14px;height:16px;background:#000;"></div>
<div style="left:181px;top:395px;width:2px;height:13px;background:#000;"></div>
<div style="left:181px;top:668px;width:2px;height:12px;background:#000;"></div>
<svg style="left:0;top:0" width="1280" height="768" viewBox="0 0 1280 768" shape-rendering="crispEdges"><rect x="630" y="393" width="1" height="1" fill="#0272ff"/><rect x="634" y="393" width="1" height="1" fill="#036fff"/><rect x="638" y="393" width="1" height="1" fill="#046cff"/><rect x="642" y="393" width="1" height="1" fill="#0569ff"/><rect x="646" y="393" width="1" height="1" fill="#0a64fe"/><rect x="650" y="393" width="1" height="1" fill="#1060fe"/><rect x="654" y="392" width="1" height="2" fill="#155bfd"/><rect x="658" y="388" width="1" height="6" fill="#1b57fd"/><rect x="662" y="382" width="1" height="12" fill="#2052fc"/><rect x="666" y="373" width="1" height="21" fill="#274efc"/><rect x="670" y="365" width="1" height="29" fill="#2e4afc"/><rect x="674" y="353" width="1" height="41" fill="#3646fc"/><rect x="678" y="340" width="1" height="54" fill="#3d42fc"/><rect x="682" y="320" width="1" height="74" fill="#443efc"/><rect x="686" y="299" width="1" height="95" fill="#4b3afd"/><rect x="690" y="268" width="1" height="126" fill="#5236fd"/><rect x="694" y="235" width="1" height="159" fill="#5832fe"/><rect x="698" y="200" width="1" height="194" fill="#5f2efe"/><rect x="702" y="175" width="1" height="219" fill="#662aff"/><rect x="706" y="157" width="1" height="237" fill="#6d25ff"/><rect x="710" y="146" width="1" height="248" fill="#7420ff"/><rect x="714" y="160" width="1" height="234" fill="#7a1aff"/><rect x="718" y="186" width="1" height="208" fill="#8115ff"/><rect x="722" y="232" width="1" height="162" fill="#8810ff"/><rect x="726" y="273" width="1" height="121" fill="#8e0dff"/><rect x="730" y="320" width="1" height="74" fill="#940aff"/><rect x="734" y="354" width="1" height="40" fill="#9906ff"/><rect x="738" y="376" width="1" height="18" fill="#9f03ff"/><rect x="742" y="384" width="1" height="10" fill="#a500ff"/><rect x="746" y="386" width="1" height="8" fill="#a800fe"/><rect x="750" y="388" width="1" height="6" fill="#ab00fd"/><rect x="754" y="390" width="1" height="4" fill="#ae00fc"/><rect x="758" y="392" width="1" height="2" fill="#b100fb"/><rect x="762" y="393" width="1" height="1" fill="#b400fa"/><rect x="766" y="393" width="1" height="1" fill="#b702f9"/><rect x="254" y="665" width="1" height="2" fill="#8c0000"/><rect x="258" y="664" width="1" height="3" fill="#a20000"/><rect x="262" y="662" width="1" height="5" fill="#b90000"/><rect x="266" y="663" width="1" height="4" fill="#d00000"/><rect x="270" y="665" width="1" height="2" fill="#e60000"/><rect x="286" y="666" width="1" height="1" fill="#fa0000"/><rect x="310" y="666" width="1" height="1" fill="#ff1400"/><rect x="314" y="666" width="1" height="1" fill="#ff1e00"/><rect x="318" y="666" width="1" height="1" fill="#ff2800"/><rect x="322" y="666" width="1" height="1" fill="#ff3200"/><rect x="326" y="666" width="1" height="1" fill="#ff3c00"/><rect x="330" y="666" width="1" height="1" fill="#ff4600"/><rect x="334" y="666" width="1" height="1" fill="#ff5000"/><rect x="338" y="666" width="1" height="1" fill="#ff5a00"/><rect x="342" y="666" width="1" height="1" fill="#ff6400"/><rect x="346" y="666" width="1" height="1" fill="#ff6e00"/><rect x="350" y="666" width="1" height="1" fill="#ff7800"/><rect x="354" y="665" width="1" height="2" fill="#ff8200"/><rect x="358" y="665" width="1" height="2" fill="#ff8c00"/><rect x="362" y="663" width="1" height="4" fill="#ff9300"/><rect x="366" y="662" width="1" height="5" fill="#ff9900"/><rect x="370" y="658" width="1" height="9" fill="#ffa000"/><rect x="374" y="648" width="1" height="19" fill="#ffa300"/><rect x="378" y="636" width="1" height="31" fill="#ffa700"/><rect x="382" y="625" width="1" height="42" fill="#ffaa00"/><rect x="386" y="623" width="1" height="44" fill="#ffaf00"/><rect x="390" y="620" width="1" height="47" fill="#ffb400"/><rect x="394" y="609" width="1" height="58" fill="#ffb900"/><rect x="398" y="582" width="1" height="85" fill="#ffbe00"/><rect x="402" y="542" width="1" height="125" fill="#ffc300"/><rect x="406" y="502" width="1" height="165" fill="#fcc900"/><rect x="410" y="486" width="1" height="181" fill="#f9cf00"/><rect x="414" y="507" width="1" height="160" fill="#f6d500"/><rect x="418" y="557" width="1" height="110" fill="#f3db00"/><rect x="422" y="603" width="1" height="64" fill="#f0e100"/><rect x="426" y="632" width="1" height="35" fill="#ede600"/><rect x="430" y="643" width="1" height="24" fill="#eaeb00"/><rect x="434" y="646" width="1" height="21" fill="#e7f000"/><rect x="438" y="646" width="1" height="21" fill="#e4f500"/><rect x="442" y="644" width="1" height="23" fill="#e1fa00"/><rect x="446" y="640" width="1" height="27" fill="#dafb00"/><rect x="450" y="637" width="1" height="30" fill="#d3fc00"/><rect x="454" y="633" width="1" height="34" fill="#ccfd00"/><rect x="458" y="630" width="1" height="37" fill="#c5fe00"/><rect x="462" y="627" width="1" height="40" fill="#beff00"/><rect x="466" y="624" width="1" height="43" fill="#b6fe08"/><rect x="470" y="622" width="1" height="45" fill="#aefd10"/><rect x="474" y="619" width="1" height="48" fill="#a6fc18"/><rect x="478" y="615" width="1" height="52" fill="#9efb20"/><rect x="482" y="606" width="1" height="61" fill="#96fa28"/><rect x="486" y="593" width="1" height="74" fill="#8afa30"/><rect x="490" y="581" width="1" height="86" fill="#7efa38"/><rect x="494" y="572" width="1" height="95" fill="#72fa40"/><rect x="498" y="571" width="1" height="96" fill="#66fa48"/><rect x="502" y="576" width="1" height="91" fill="#5afa50"/><rect x="506" y="583" width="1" height="84" fill="#50f65a"/><rect x="510" y="589" width="1" height="78" fill="#46f264"/><rect x="514" y="591" width="1" height="76" fill="#3cee6e"/><rect x="518" y="589" width="1" height="78" fill="#32ea78"/><rect x="522" y="586" width="1" height="81" fill="#28e682"/><rect x="526" y="585" width="1" height="82" fill="#20e38b"/><rect x="530" y="585" width="1" height="82" fill="#18e094"/><rect x="534" y="583" width="1" height="84" fill="#10dd9d"/><rect x="538" y="584" width="1" height="83" fill="#08daa6"/><rect x="542" y="585" width="1" height="82" fill="#00d7af"/><rect x="546" y="590" width="1" height="77" fill="#00d2b7"/><rect x="550" y="591" width="1" height="76" fill="#00cdbf"/><rect x="554" y="593" width="1" height="74" fill="#00c8c7"/><rect x="558" y="595" width="1" height="72" fill="#00c3cf"/><rect x="562" y="599" width="1" height="68" fill="#00bed7"/><rect x="566" y="598" width="1" height="69" fill="#00b8db"/><rect x="570" y="600" width="1" height="67" fill="#00b2df"/><rect x="574" y="593" width="1" height="74" fill="#00ace3"/><rect x="578" y="589" width="1" height="78" fill="#00a6e7"/><rect x="582" y="575" width="1" height="92" fill="#00a0eb"/><rect x="586" y="568" width="1" height="99" fill="#009bee"/><rect x="590" y="556" width="1" height="111" fill="#0096f1"/><rect x="594" y="553" width="1" height="114" fill="#0091f4"/><rect x="598" y="547" width="1" height="120" fill="#008cf7"/><rect x="602" y="546" width="1" height="121" fill="#0087fa"/><rect x="606" y="542" width="1" height="125" fill="#0084fb"/><rect x="610" y="536" width="1" height="131" fill="#0081fc"/><rect x="614" y="536" width="1" height="131" fill="#007efd"/><rect x="618" y="531" width="1" height="136" fill="#007bfe"/><rect x="622" y="527" width="1" height="140" fill="#0078ff"/><rect x="626" y="514" width="1" height="153" fill="#0175ff"/><rect x="630" y="507" width="1" height="160" fill="#0272ff"/><rect x="634" y="500" width="1" height="167" fill="#036fff"/><rect x="638" y="489" width="1" height="178" fill="#046cff"/><rect x="642" y="480" width="1" height="187" fill="#0569ff"/><rect x="646" y="474" width="1" height="193" fill="#0a64fe"/><rect x="650" y="475" width="1" height="192" fill="#1060fe"/><rect x="654" y="464" width="1" height="203" fill="#155bfd"/><rect x="658" y="440" width="1" height="227" fill="#1b57fd"/><rect x="662" y="419" width="1" height="248" fill="#2052fc"/><rect x="666" y="420" width="1" height="247" fill="#274efc"/><rect x="670" y="451" width="1" height="216" fill="#2e4afc"/><rect x="674" y="470" width="1" height="197" fill="#3646fc"/><rect x="678" y="479" width="1" height="188" fill="#3d42fc"/><rect x="682" y="459" width="1" height="208" fill="#443efc"/><rect x="686" y="453" width="1" height="214" fill="#4b3afd"/><rect x="690" y="444" width="1" height="223" fill="#5236fd"/><rect x="694" y="443" width="1" height="224" fill="#5832fe"/><rect x="698" y="438" width="1" height="229" fill="#5f2efe"/><rect x="702" y="439" width="1" height="228" fill="#662aff"/><rect x="706" y="443" width="1" height="224" fill="#6d25ff"/><rect x="710" y="452" width="1" height="215" fill="#7420ff"/><rect x="714" y="468" width="1" height="199" fill="#7a1aff"/><rect x="718" y="487" width="1" height="180" fill="#8115ff"/><rect x="722" y="502" width="1" height="165" fill="#8810ff"/><rect x="726" y="519" width="1" height="148" fill="#8e0dff"/><rect x="730" y="547" width="1" height="120" fill="#940aff"/><rect x="734" y="575" width="1" height="92" fill="#9906ff"/><rect x="738" y="597" width="1" height="70" fill="#9f03ff"/><rect x="742" y="602" width="1" height="65" fill="#a500ff"/><rect x="746" y="608" width="1" height="59" fill="#a800fe"/><rect x="750" y="614" width="1" height="53" fill="#ab00fd"/><rect x="754" y="624" width="1" height="43" fill="#ae00fc"/><rect x="758" y="630" width="1" height="37" fill="#b100fb"/><rect x="762" y="635" width="1" height="32" fill="#b400fa"/><rect x="766" y="639" width="1" height="28" fill="#b702f9"/><rect x="770" y="640" width="1" height="27" fill="#ba04f8"/><rect x="774" y="641" width="1" height="26" fill="#bd06f7"/><rect x="778" y="642" width="1" height="25" fill="#c008f6"/><rect x="782" y="644" width="1" height="23" fill="#c30af5"/><rect x="786" y="646" width="1" height="21" fill="#c118ef"/><rect x="790" y="648" width="1" height="19" fill="#bf26e9"/><rect x="794" y="650" width="1" height="17" fill="#bd34e3"/><rect x="798" y="652" width="1" height="15" fill="#bb42dd"/><rect x="802" y="652" width="1" height="15" fill="#b950d7"/><rect x="806" y="653" width="1" height="14" fill="#b64cd2"/><rect x="810" y="655" width="1" height="12" fill="#b348cd"/><rect x="814" y="657" width="1" height="10" fill="#b044c8"/><rect x="818" y="657" width="1" height="10" fill="#ad40c3"/><rect x="822" y="656" width="1" height="11" fill="#aa3cbe"/><rect x="826" y="654" width="1" height="13" fill="#a73abb"/><rect x="830" y="655" width="1" height="12" fill="#a438b8"/><rect x="834" y="655" width="1" height="12" fill="#a136b5"/><rect x="838" y="657" width="1" height="10" fill="#9e34b2"/><rect x="842" y="659" width="1" height="8" fill="#9b32af"/><rect x="846" y="660" width="1" height="7" fill="#9830ac"/><rect x="850" y="661" width="1" height="6" fill="#952ea9"/><rect x="854" y="662" width="1" height="5" fill="#922ca6"/><rect x="858" y="664" width="1" height="3" fill="#8f2aa3"/><rect x="862" y="665" width="1" height="2" fill="#8c28a0"/></svg>
<div style="left:1172px;top:395px;width:12px;height:12px;background:#000;"></div>
<div style="left:1172px;top:668px;width:12px;height:12px;background:#000;"></div>
<span class="t " style="left:182.40px;top:398px;font-size:10px;line-height:10px;color:#f0f0f0;-webkit-text-stroke:0.1px currentColor;letter-spacing:-0.281px;transform:scaleX(0.9467);">0</span>
<span class="t " style="left:262.00px;top:398px;font-size:10px;line-height:10px;color:#f0f0f0;-webkit-text-stroke:0.1px currentColor;letter-spacing:-0.312px;transform:scaleX(0.9711);">20</span>
<span class="t " style="left:342.00px;top:398px;font-size:10px;line-height:10px;color:#f0f0f0;-webkit-text-stroke:0.1px currentColor;letter-spacing:-0.312px;transform:scaleX(0.9711);">40</span>
<span class="t " style="left:422.00px;top:398px;font-size:10px;line-height:10px;color:#f0f0f0;-webkit-text-stroke:0.1px currentColor;letter-spacing:-0.312px;transform:scaleX(0.9711);">60</span>
<span class="t " style="left:502.00px;top:398px;font-size:10px;line-height:10px;color:#f0f0f0;-webkit-text-stroke:0.1px currentColor;letter-spacing:-0.312px;transform:scaleX(0.9711);">80</span>
<span class="t " style="left:582.00px;top:398px;font-size:10px;line-height:10px;color:#f0f0f0;-webkit-text-stroke:0.1px currentColor;letter-spacing:-0.172px;transform:scaleX(0.9790);">100</span>
<span class="t " style="left:662.00px;top:398px;font-size:10px;line-height:10px;color:#f0f0f0;-webkit-text-stroke:0.1px currentColor;letter-spacing:-0.172px;transform:scaleX(0.9790);">120</span>
<span class="t " style="left:742.00px;top:398px;font-size:10px;line-height:10px;color:#f0f0f0;-webkit-text-stroke:0.1px currentColor;letter-spacing:-0.172px;transform:scaleX(0.9790);">140</span>
<span class="t " style="left:822.00px;top:398px;font-size:10px;line-height:10px;color:#f0f0f0;-webkit-text-stroke:0.1px currentColor;letter-spacing:-0.172px;transform:scaleX(0.9790);">160</span>
<span class="t " style="left:902.00px;top:398px;font-size:10px;line-height:10px;color:#f0f0f0;-webkit-text-stroke:0.1px currentColor;letter-spacing:-0.172px;transform:scaleX(0.9790);">180</span>
<span class="t " style="left:982.00px;top:398px;font-size:10px;line-height:10px;color:#f0f0f0;-webkit-text-stroke:0.1px currentColor;letter-spacing:-0.172px;transform:scaleX(0.9790);">200</span>
<span class="t " style="left:1062.20px;top:398px;font-size:10px;line-height:10px;color:#f0f0f0;-webkit-text-stroke:0.1px currentColor;letter-spacing:-0.343px;transform:scaleX(0.9260);">kHz weighted by corrected SPL</span>
<span class="t " style="left:182.40px;top:671px;font-size:10px;line-height:10px;color:#f0f0f0;-webkit-text-stroke:0.1px currentColor;letter-spacing:-0.281px;transform:scaleX(0.9467);">0</span>
<span class="t " style="left:262.00px;top:671px;font-size:10px;line-height:10px;color:#f0f0f0;-webkit-text-stroke:0.1px currentColor;letter-spacing:-0.312px;transform:scaleX(0.9711);">20</span>
<span class="t " style="left:342.00px;top:671px;font-size:10px;line-height:10px;color:#f0f0f0;-webkit-text-stroke:0.1px currentColor;letter-spacing:-0.312px;transform:scaleX(0.9711);">40</span>
<span class="t " style="left:422.00px;top:671px;font-size:10px;line-height:10px;color:#f0f0f0;-webkit-text-stroke:0.1px currentColor;letter-spacing:-0.312px;transform:scaleX(0.9711);">60</span>
<span class="t " style="left:502.00px;top:671px;font-size:10px;line-height:10px;color:#f0f0f0;-webkit-text-stroke:0.1px currentColor;letter-spacing:-0.312px;transform:scaleX(0.9711);">80</span>
<span class="t " style="left:582.00px;top:671px;font-size:10px;line-height:10px;color:#f0f0f0;-webkit-text-stroke:0.1px currentColor;letter-spacing:-0.172px;transform:scaleX(0.9790);">100</span>
<span class="t " style="left:662.00px;top:671px;font-size:10px;line-height:10px;color:#f0f0f0;-webkit-text-stroke:0.1px currentColor;letter-spacing:-0.172px;transform:scaleX(0.9790);">120</span>
<span class="t " style="left:742.00px;top:671px;font-size:10px;line-height:10px;color:#f0f0f0;-webkit-text-stroke:0.1px currentColor;letter-spacing:-0.172px;transform:scaleX(0.9790);">140</span>
<span class="t " style="left:822.00px;top:671px;font-size:10px;line-height:10px;color:#f0f0f0;-webkit-text-stroke:0.1px currentColor;letter-spacing:-0.172px;transform:scaleX(0.9790);">160</span>
<span class="t " style="left:902.00px;top:671px;font-size:10px;line-height:10px;color:#f0f0f0;-webkit-text-stroke:0.1px currentColor;letter-spacing:-0.172px;transform:scaleX(0.9790);">180</span>
<span class="t " style="left:982.00px;top:671px;font-size:10px;line-height:10px;color:#f0f0f0;-webkit-text-stroke:0.1px currentColor;letter-spacing:-0.172px;transform:scaleX(0.9790);">200</span>
<span class="t " style="left:1062.20px;top:671px;font-size:10px;line-height:10px;color:#f0f0f0;-webkit-text-stroke:0.1px currentColor;letter-spacing:-0.343px;transform:scaleX(0.9260);">kHz weighted by corrected SPL</span>
<span class="t " style="left:441.50px;top:159px;font-size:10px;line-height:10px;color:#d4d4d4;letter-spacing:0.121px;transform:scaleX(1.0240);">Mode = 132 (kHz weighted by corrected SPL)</span>
<span class="t " style="left:441.50px;top:432px;font-size:10px;line-height:10px;color:#d4d4d4;letter-spacing:0.121px;transform:scaleX(1.0240);">Mode = 120 (kHz weighted by corrected SPL)</span>
<span class="t" style="left:169px;top:664px;font-size:10px;line-height:10px;color:#222;transform:rotate(-90deg);transform-origin:0 0;width:14px;height:8px;overflow:hidden;">kHz</span>
<div style="left:168px;top:703px;width:1057px;height:25px;background:#fff;border-top:2px solid #696969;border-left:2px solid #696969;border-right:1px solid #a0a0a0;"></div>
<div style="left:0px;top:728px;width:1280px;height:40px;background:#eaeaea;"></div>
<div style="left:572px;top:728px;width:708px;height:40px;background:#ececec;"></div>
<div style="left:1275px;top:728px;width:1px;height:40px;background:#b8b8b8;"></div>
<div style="left:48px;top:728px;width:344px;height:40px;background:#fff;border:1px solid #c4c4c4;border-bottom:none;"></div>
<span class="t " style="left:88.70px;top:742px;font-size:15px;line-height:15px;color:#2b2b2b;letter-spacing:-0.141px;transform:scaleX(0.9802);">Escribe aquí para buscar</span>
<div style="left:443px;top:728px;width:48px;height:40px;background:#f8f8f8;"></div>
<div style="left:443px;top:766px;width:48px;height:2px;background:#2453d0;"></div>
<svg style="left:455px;top:736px" width="24" height="24" viewBox="0 0 24 24"><g stroke="#4854ee" fill="none"><path d="M0 5.4C2.5 4.8 4.6 3.2 6 1" stroke-width="2.15"/><path d="M0 10.8C4.5 9.4 9 6.6 11.4 3.6" stroke-width="2.15"/><path d="M8.2 1.9L11.9 3.5" stroke-width="1.7"/><path d="M2.2 14.8C8 11.6 14.3 6.7 16.4 1" stroke-width="2.35"/><path d="M3.3 14.8C4.7 17.7 5.3 20.6 5.3 24" stroke-width="2.6"/><path d="M9.4 15.4C14.5 12.6 19.3 8.7 21.6 4L22.8 0.8" stroke-width="2.35"/><path d="M11.6 14.4V24" stroke-width="3.1"/><path d="M17.6 17.2C17.2 20.4 19.6 22.6 24 22.6" stroke-width="2.5"/><path d="M19.4 19.2L23 18.2" stroke-width="1.6"/></g><g fill="#4854ee"><path d="M13.6 0H18.2L17 2.6L14.8 2Z"/><path d="M21.6 0H24V15.6L23 16.2L20.4 12.8L18.6 10.8L21 7.2Z"/><rect x="0" y="19.8" width="1.2" height="4.2"/><rect x="0" y="0" width="1.6" height="1.4"/></g><circle cx="21.7" cy="14.3" r="1.8" fill="#f8f8f8"/></svg>
<div style="left:572px;top:728px;width:1px;height:40px;background:#f7f7f7;"></div>
<span class="t " style="left:599.50px;top:742px;font-size:12.6px;line-height:12.6px;color:#1b1b1b;letter-spacing:-0.206px;transform:scaleX(0.9676);">Dirección</span>
<div style="left:654px;top:733px;width:228px;height:30px;background:#fff;border:1px solid #c8c8c8;"></div>
<div style="left:851px;top:734px;width:1px;height:28px;background:#dcdcdc;"></div>
<span class="t " style="left:985.30px;top:743px;font-size:13.6px;line-height:13.6px;color:#1b1b1b;letter-spacing:-0.446px;transform:scaleX(0.9539);">17°C</span>
<span class="t " style="left:1129.70px;top:743px;font-size:11.7px;line-height:11.7px;color:#1b1b1b;letter-spacing:-1.548px;transform:scaleX(0.8475);">ESP</span>
<span class="t " style="left:1178.70px;top:734px;font-size:11.7px;line-height:11.7px;color:#1b1b1b;letter-spacing:-0.444px;transform:scaleX(0.9354);">16:53</span>
<span class="t " style="left:1164.00px;top:752px;font-size:11.7px;line-height:11.7px;color:#1b1b1b;letter-spacing:-0.222px;transform:scaleX(0.9654);">12-12-2021</span>
<span class="t " style="left:1252.30px;top:750px;font-size:10.5px;line-height:10.5px;color:#222;font-weight:bold;letter-spacing:-0.972px;transform:scaleX(0.8005);">1</span>
<svg style="left:0;top:728px" width="1280" height="40" viewBox="0 728 1280 40"><path d="M16 742L22.3 741.1V747.1H16ZM23 741L32.2 739.8V747.1H23ZM16 747.9H22.3V754.6L16 753.8ZM23 747.9H32.2V756L23 754.7Z" fill="#000"/><circle cx="70.3" cy="745.3" r="5.15" stroke="#1f1f1f" stroke-width="1.15" fill="none"/><path d="M66.6 749.2L60.2 755.6" stroke="#1f1f1f" stroke-width="1.2" fill="none"/><circle cx="415.9" cy="748" r="6.6" stroke="#0c0c0c" stroke-width="2" fill="none"/><path d="M577.2 739L580.5 735.4L583.8 739M577.2 757.6L580.5 761.2L583.8 757.6" stroke="#484848" stroke-width="1.9" fill="none"/><path d="M831.2 746.2L835.7 750.6L840.2 746.2" stroke="#555" stroke-width="1.1" fill="none"/><path d="M870.3 746.3A4.1 4.1 0 1 1 864.1 746" stroke="#747474" stroke-width="1.4" fill="none"/><path d="M863.2 743.7H867.3V747.6" stroke="#747474" stroke-width="1.4" fill="none"/><defs><radialGradient id="hg" cx="0.5" cy="0.5" r="0.5"><stop offset="0" stop-color="#081440"/><stop offset="0.74" stop-color="#0a1a50"/><stop offset="0.88" stop-color="#1560b0"/><stop offset="1" stop-color="#2796ea"/></radialGradient><linearGradient id="hl" x1="0" y1="0" x2="0" y2="1"><stop offset="0" stop-color="#2a92e8" stop-opacity="0.95"/><stop offset="1" stop-color="#2f66b8" stop-opacity="0.85"/></linearGradient><clipPath id="hc"><circle cx="905.1" cy="749.5" r="14.6"/></clipPath></defs><circle cx="905.1" cy="749.5" r="15.8" fill="url(#hg)"/><path d="M889 733H921V744.6Q905 743.2 889 744.6Z" fill="url(#hl)" clip-path="url(#hc)"/><text x="904.7" y="761.6" text-anchor="middle" font-family="Liberation Sans, sans-serif" font-weight="bold" font-size="33" fill="#fff">?</text><g stroke="#1b1b1b" fill="none"><rect x="952.9" y="741.2" width="19.7" height="13.8" rx="1.3" stroke-width="1.4"/><path d="M972.6 743.5H975.6V752.8A2.2 2.2 0 0 1 973.4 755H970" stroke-width="1.4"/><path d="M955.8 744.2H969.8" stroke-width="1.1"/><rect x="956.1" y="746.8" width="5.6" height="5.4" stroke-width="1.2"/><path d="M964.2 747.1H969.8M964.2 749.6H969.8M964.2 752.1H969.8" stroke-width="1.1"/></g><path d="M1031 751L1037 745L1043 751" stroke="#1b1b1b" stroke-width="1.4" fill="none"/><g stroke="#1b1b1b" fill="none" stroke-width="1.15"><rect x="1056.6" y="744.7" width="6.9" height="7.1" rx="1.5"/><path d="M1063.6 747.2L1066.5 745.6V751L1063.6 749.4"/><path d="M1057 742.6C1058.6 739.6 1062.4 739.6 1064 742.6M1057 753.8C1058.6 756.8 1062.4 756.8 1064 753.8"/></g><g stroke="#1b1b1b" fill="none" stroke-width="1.15"><rect x="1081.2" y="745.1" width="11" height="6.5"/><path d="M1078.1 742.2V744.8M1080.3 742.2V744.8M1079.2 748.6V752.6"/></g><rect x="1082.8" y="746.7" width="7.8" height="3.3" fill="#1b1b1b"/><rect x="1092.2" y="747" width="1.2" height="2.7" fill="#1b1b1b"/><path d="M1076.9 744.7H1081.5V746.5A2.3 2.3 0 0 1 1076.9 746.5Z" fill="#1b1b1b"/><g stroke="#1b1b1b" fill="none" stroke-width="1.15"><circle cx="1108.6" cy="748.2" r="7.3"/><ellipse cx="1108.6" cy="748.2" rx="3.3" ry="7.3"/><path d="M1101.9 745.6H1115.3M1101.9 750.8H1111"/></g><circle cx="1113.6" cy="752.6" r="3.5" fill="#ececec" stroke="#1b1b1b" stroke-width="1.15"/><path d="M1111.3 750.3L1115.9 754.9" stroke="#1b1b1b" stroke-width="1.15"/><path d="M1239 740.2H1255V752.8H1247.6L1245 755.4V752.8H1239Z" fill="#111"/><path d="M1241.9 743.3H1251.9M1241.9 746.4H1251.9M1241.9 749.4H1248.8" stroke="#e4e4e4" stroke-width="1"/><circle cx="1254.4" cy="755.3" r="7.6" fill="#dcdcdc" stroke="#9a9a9a" stroke-width="1.1"/></svg>
</body></html>
